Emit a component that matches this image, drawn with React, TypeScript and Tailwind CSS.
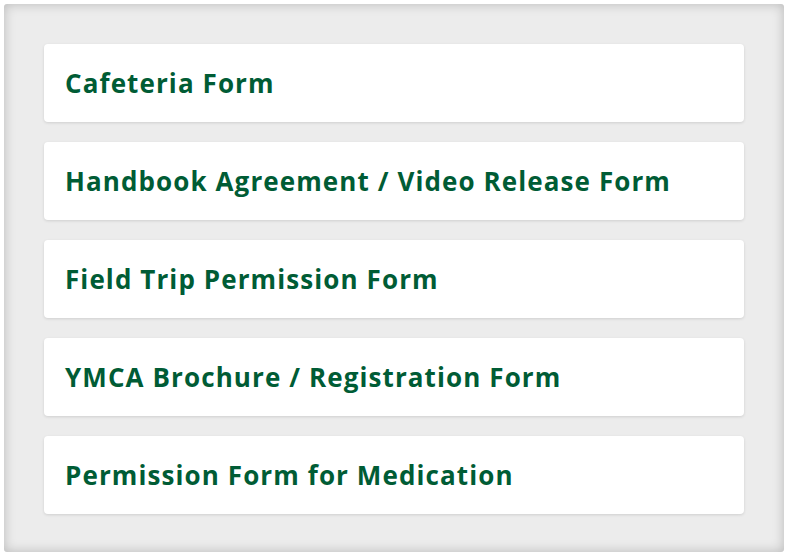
import React from 'react';

const forms = [
  'Cafeteria Form',
  'Handbook Agreement / Video Release Form',
  'Field Trip Permission Form',
  'YMCA Brochure / Registration Form',
  'Permission Form for Medication',
];

export default function App() {
  return (
    <div className="w-[788px] h-[556px] bg-white p-[4px]" style={{ fontFamily: '"Open Sans", sans-serif' }}>
      <div className="w-full h-full bg-[#ececec] rounded-[3px] shadow-[inset_0_0_12px_rgba(0,0,0,0.22)] px-[40px] pt-[40px] flex flex-col gap-[20px]">
        {forms.map((title) => (
          <a
            key={title}
            href="#"
            className="h-[78px] bg-white rounded-[4px] shadow-[0_1px_3px_rgba(0,0,0,0.12)] flex items-center px-[21px] text-[26px] font-bold tracking-[1.1px] text-[#005c35]"
          >
            {title}
          </a>
        ))}
      </div>
    </div>
  );
}
